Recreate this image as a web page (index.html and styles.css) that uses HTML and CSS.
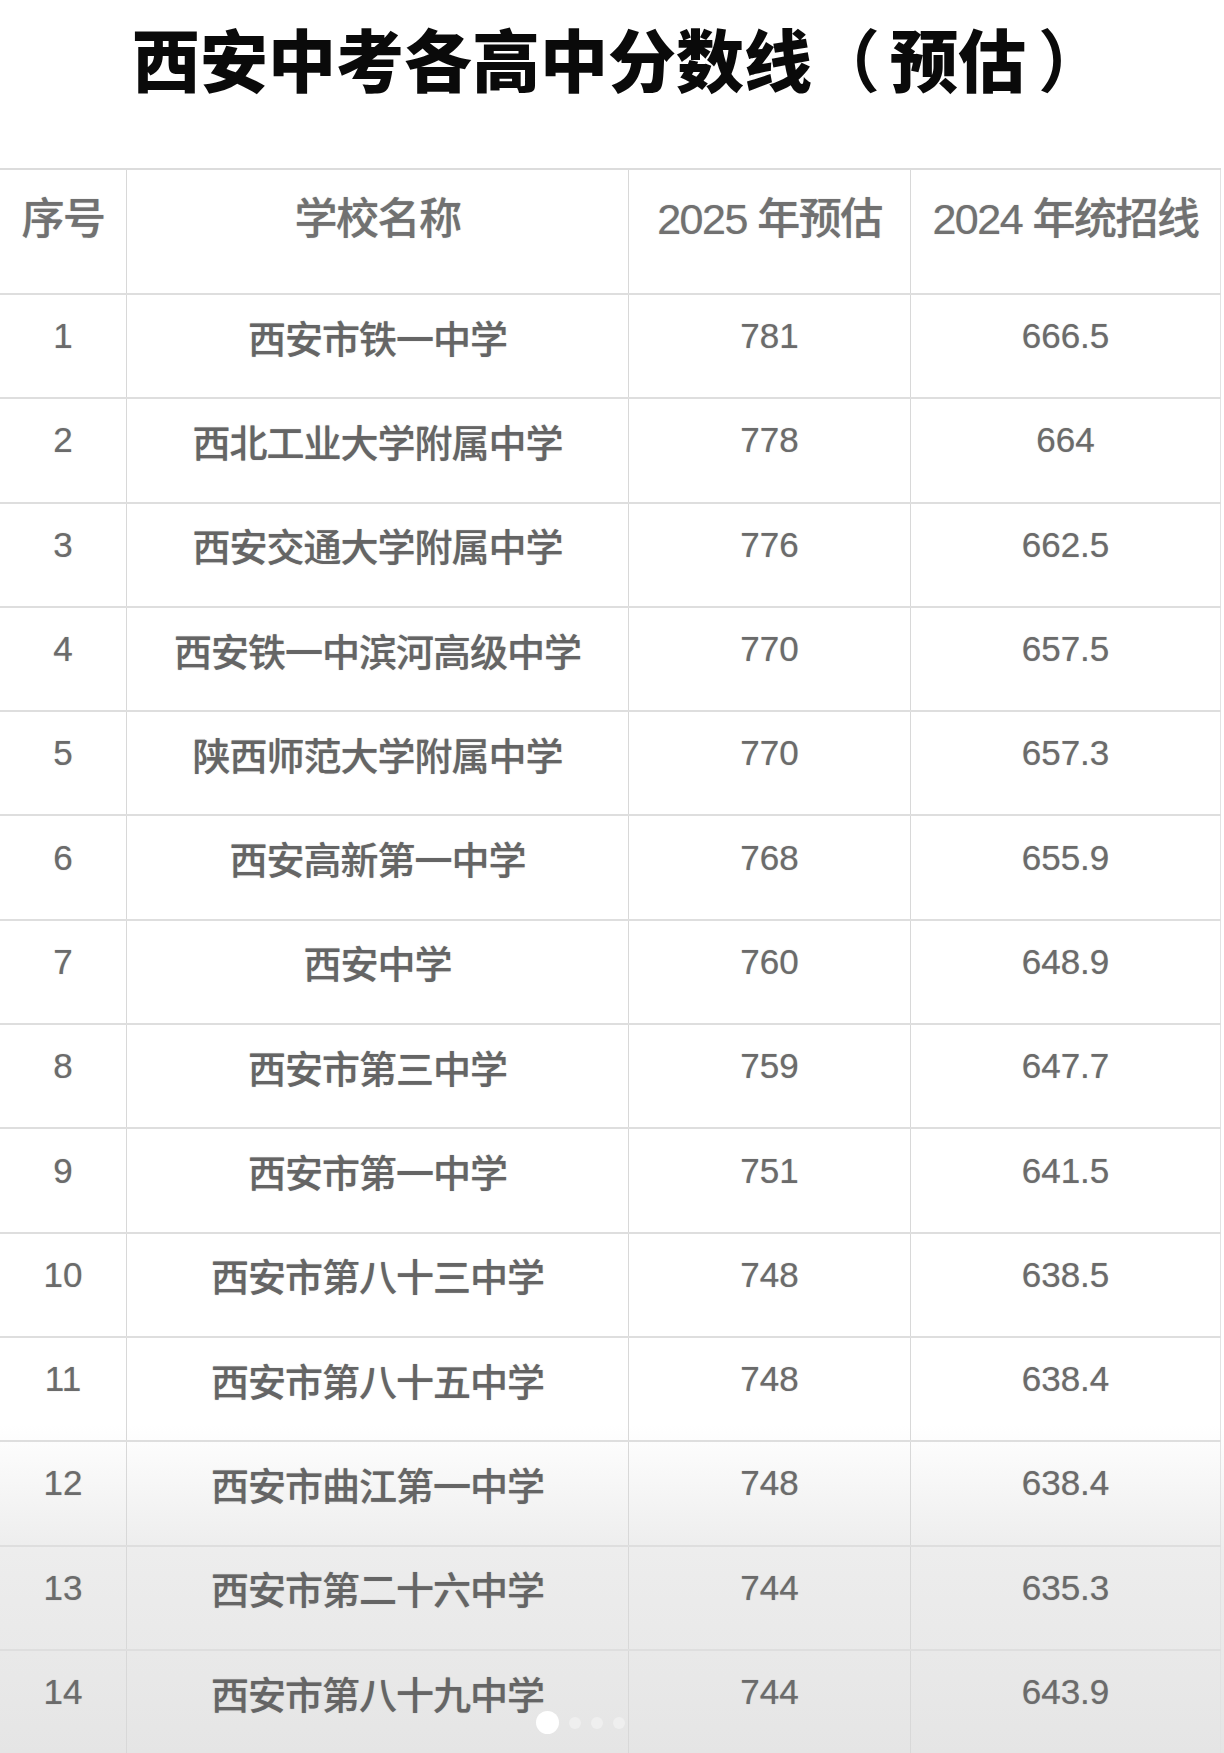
FILE: index.html
```html
<!DOCTYPE html>
<html lang="zh-CN">
<head>
<meta charset="utf-8">
<title>西安中考各高中分数线（预估）</title>
<link rel="stylesheet" href="styles.css">
</head>
<body>
<div class="page">
  <h1 class="title">西安中考各高中分数线<span class="paren">（</span><span class="inner">预估</span><span class="paren">）</span></h1>
  <div class="table">
    <div class="row head">
      <div class="cell">序号</div>
      <div class="cell">学校名称</div>
      <div class="cell">2025 年预估</div>
      <div class="cell">2024 年统招线</div>
    </div>
    <div class="row"><div class="cell num">1</div><div class="cell name">西安市铁一中学</div><div class="cell num">781</div><div class="cell num">666.5</div></div>
    <div class="row"><div class="cell num">2</div><div class="cell name">西北工业大学附属中学</div><div class="cell num">778</div><div class="cell num">664</div></div>
    <div class="row"><div class="cell num">3</div><div class="cell name">西安交通大学附属中学</div><div class="cell num">776</div><div class="cell num">662.5</div></div>
    <div class="row"><div class="cell num">4</div><div class="cell name">西安铁一中滨河高级中学</div><div class="cell num">770</div><div class="cell num">657.5</div></div>
    <div class="row"><div class="cell num">5</div><div class="cell name">陕西师范大学附属中学</div><div class="cell num">770</div><div class="cell num">657.3</div></div>
    <div class="row"><div class="cell num">6</div><div class="cell name">西安高新第一中学</div><div class="cell num">768</div><div class="cell num">655.9</div></div>
    <div class="row"><div class="cell num">7</div><div class="cell name">西安中学</div><div class="cell num">760</div><div class="cell num">648.9</div></div>
    <div class="row"><div class="cell num">8</div><div class="cell name">西安市第三中学</div><div class="cell num">759</div><div class="cell num">647.7</div></div>
    <div class="row"><div class="cell num">9</div><div class="cell name">西安市第一中学</div><div class="cell num">751</div><div class="cell num">641.5</div></div>
    <div class="row"><div class="cell num">10</div><div class="cell name">西安市第八十三中学</div><div class="cell num">748</div><div class="cell num">638.5</div></div>
    <div class="row"><div class="cell num">11</div><div class="cell name">西安市第八十五中学</div><div class="cell num">748</div><div class="cell num">638.4</div></div>
    <div class="row"><div class="cell num">12</div><div class="cell name">西安市曲江第一中学</div><div class="cell num">748</div><div class="cell num">638.4</div></div>
    <div class="row"><div class="cell num">13</div><div class="cell name">西安市第二十六中学</div><div class="cell num">744</div><div class="cell num">635.3</div></div>
    <div class="row"><div class="cell num">14</div><div class="cell name">西安市第八十九中学</div><div class="cell num">744</div><div class="cell num">643.9</div></div>
  </div>
  <div class="dots">
    <span class="dot active"></span>
    <span class="dot"></span>
    <span class="dot"></span>
    <span class="dot"></span>
  </div>
</div>
</body>
</html>
```

FILE: styles.css
```css
html, body {
  margin: 0;
  padding: 0;
}
body {
  width: 1224px;
  height: 1753px;
  overflow: hidden;
  background: linear-gradient(to bottom, #ffffff 0, #ffffff 1425px, #ededed 1550px, #e5e5e5 1753px);
  font-family: "Liberation Sans", "Noto Sans CJK SC", sans-serif;
}
.page {
  position: relative;
  width: 1224px;
  height: 1753px;
}
.title {
  margin: 0;
  height: 168px;
  box-sizing: border-box;
  padding: 16px 0 0 132px;
  text-align: left;
  font-family: "Noto Sans CJK SC", sans-serif;
  font-weight: 900;
  font-size: 68px;
  line-height: 84px;
  color: #0a0a0a;
  white-space: nowrap;
}
.title .paren {
  font-weight: 700;
}
.title .inner {
  margin: 0 12px 0 10px;
}
.table {
  border-top: 2px solid #dcdcdc;
  width: 1221px;
}
.row {
  display: grid;
  grid-template-columns: 126px 502px 282px 311px;
  height: 104.3px;
  box-sizing: border-box;
  border-bottom: 2px solid #dedede;
}
.row.head {
  height: 125px;
}
.cell {
  display: flex;
  align-items: center;
  justify-content: center;
  border-left: 1.5px solid #d8d8d8;
  color: #6b6b6b;
  font-size: 35px;
  padding-bottom: 20px;
  box-sizing: border-box;
  text-shadow: 0 0 1px rgba(90, 90, 90, 0.5);
}
.cell:first-child {
  border-left: none;
}
.cell:last-child {
  border-right: 1.5px solid #e2e2e2;
}
.head .cell {
  align-items: flex-start;
  padding-top: 14px;
  padding-bottom: 0;
  font-size: 43px;
  font-weight: 500;
  letter-spacing: -1.5px;
  color: #717171;
}
.name {
  font-family: "Noto Sans CJK SC", sans-serif;
  font-size: 38px;
  font-weight: 500;
  letter-spacing: -1px;
  color: #656565;
}
.num {
  font-size: 35px;
}
.dots {
  position: absolute;
  left: 536px;
  top: 1711px;
  display: flex;
  gap: 10px;
  align-items: center;
}
.dot {
  width: 12px;
  height: 12px;
  border-radius: 50%;
  background: rgba(255, 255, 255, 0.35);
}
.dot.active {
  width: 23px;
  height: 23px;
  background: #ffffff;
}
```
